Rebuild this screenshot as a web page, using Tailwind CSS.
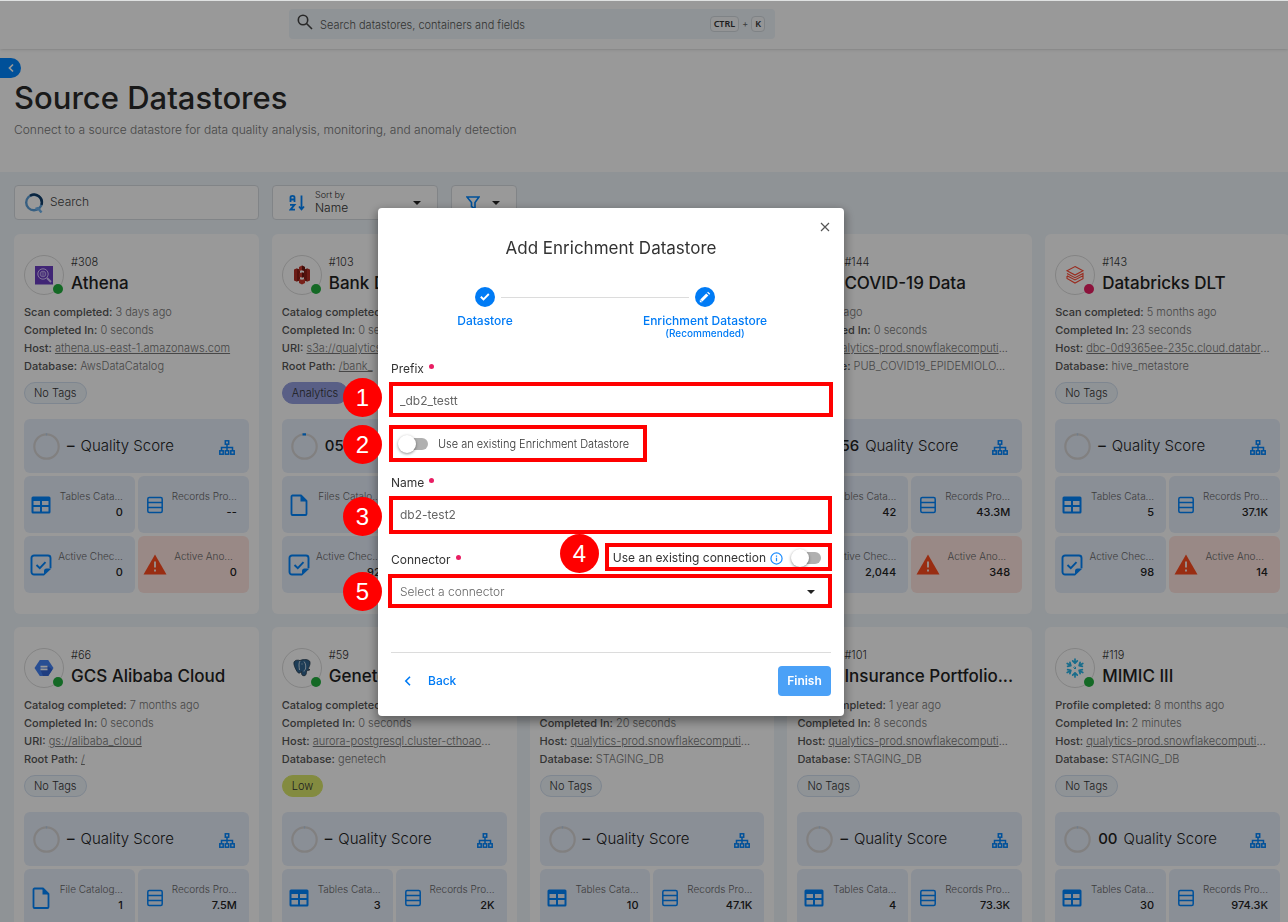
<!DOCTYPE html>
<html lang="en">
<head>
<meta charset="utf-8">
<title>Source Datastores</title>
<script src="https://cdn.jsdelivr.net/npm/@tailwindcss/browser@4"></script>
</head>
<body class="h-screen overflow-hidden bg-[#dfe1e1] pt-px font-['Inter',sans-serif] text-xs text-[#333]">

<svg class="hidden" aria-hidden="true">
  <symbol id="i-tree" viewBox="0 0 16 15"><g fill="none" stroke="currentColor" stroke-width="1.5"><rect x="6.3" y=".8" width="3.4" height="3.4"/><rect x=".8" y="10.8" width="3.4" height="3.4"/><rect x="6.3" y="10.8" width="3.4" height="3.4"/><rect x="11.8" y="10.8" width="3.4" height="3.4"/><path d="M8 4v7M2.5 11V7.5h11V11"/></g></symbol>
  <symbol id="i-table" viewBox="0 0 20 18"><path fill="currentColor" fill-rule="evenodd" d="M2 .5h16a1.500 1.500 0 0 1 1.500 1.500v14a1.500 1.500 0 0 1-1.500 1.500H2A1.500 1.500 0 0 1 .5 16V2A1.500 1.500 0 0 1 2 .5zM2.500 5v4H9V5zM11 5v4h6.500V5zM2.500 11v4.500H9V11zM11 11v4.500h6.500V11z"/></symbol>
  <symbol id="i-records" viewBox="0 0 16 18"><g fill="none" stroke="currentColor" stroke-width="1.500"><rect x=".8" y="1.500" width="14.400" height="15" rx="1.500"/><path d="M1 6.500h14M1 11.500h14"/></g></symbol>
  <symbol id="i-file" viewBox="0 0 18 22"><path fill="none" stroke="currentColor" stroke-width="1.800" stroke-linejoin="round" d="M2.500 1.500h8.500l5.500 5.500v13a1 1 0 0 1-1 1h-13a1 1 0 0 1-1-1v-17.500a1 1 0 0 1 1-1z"/><path fill="currentColor" d="M10.500 1.500v6h6z"/></symbol>
  <symbol id="i-check" viewBox="0 0 22 22"><path fill="none" stroke="currentColor" stroke-width="1.900" d="M14 20.500H4A2.500 2.500 0 0 1 1.500 18V4A2.500 2.500 0 0 1 4 1.500h14A2.500 2.500 0 0 1 20.500 4v10M6.500 11l3.300 3.200 5.700-6"/><path fill="currentColor" d="M14 21.500V17a2.500 2.500 0 0 1 2.500-2.500h5z"/></symbol>
  <symbol id="i-warn" viewBox="0 0 24 21"><path fill="#ff4b1f" d="M12 .5 23.500 20.500H.5z"/><path fill="#ffe5e0" d="M11 7.500h2v6h-2zM11 15.500h2v2h-2z"/></symbol>
  <symbol id="l-athena" viewBox="0 0 20 20"><rect x="1" y="1" width="18" height="18.500" fill="#6c3fc4"/><g fill="none" stroke="#d9c8ff"><circle cx="9" cy="9" r="5.200" stroke-width="1"/><circle cx="9" cy="9" r="2.800" stroke-width=".8"/><path d="m13 13 4 4" stroke-width="1.800"/><path d="M7.500 8h3M7.500 10h3" stroke-width=".8"/></g></symbol>
  <symbol id="l-s3" viewBox="0 0 20 20"><path fill="#b53025" d="m2 4.500 3-1.200v13.400l-3-1.200zM18 4.500l-3-1.200v13.400l3-1.200z"/><path fill="#8c1f17" d="m5 3.500 3 1v11l-3 1zM15 3.500l-3 1v11l3 1z"/><path fill="#c8382c" d="m10 .5 3 1.500v4l-3-.8-3 .8V2zM10 19.500 13 18v-4l-3 .8L7 14v4zM7.500 8l2.500-.5 2.500.5v4l-2.500.5L7.500 12z"/><path fill="#6d1710" d="M10 .5 13 2v4l-3-.8zM10 7.500l2.500.5v4l-2.500.5z"/></symbol>
  <symbol id="l-dbx" viewBox="0 0 20 20"><path fill="none" stroke="#ff4a35" stroke-width="1.100" d="m10 1.500 8 4.300-8 4.300-8-4.300zM2 8.500l8 4.200 8-4.200v2.200L10 15l-8-4.200M2 11v2.500L10 18l8-4.300V11"/></symbol>
  <symbol id="l-gcs" viewBox="0 0 20 20"><path fill="#4482f5" d="M5.800 2h8.400l5.300 8-5.300 8H5.800L.5 10z"/><path fill="#3367d6" d="m13.500 8 5 3.500-4.300 6.500H9l-2.500-6z"/><path fill="#fff" d="M6.500 7.700h7v1.900h-7zM6.500 10.400h7v1.900h-7z"/></symbol>
  <symbol id="l-pg" viewBox="0 0 20 20"><path fill="#336791" stroke="#283b4d" stroke-width=".8" d="M2 4c1-2 4-2.200 6-1.400C10 1.500 15 .8 17.500 3c1.500 2.500-.5 6-1.500 8.200l2 .4c-1 1-2.300 1-3.300.9-.4 2.500-.2 5.200-2.700 5.300-2.500 0-2.500-2-2.500-4.300l-1 .9c-.7 1.100-2.300 1-3.300-.7C3.500 11 1.300 6.500 2 4z"/><path fill="none" stroke="#eef4fa" stroke-width=".8" d="M8 3C6.500 5 7 8.500 7.500 12M12 3.500c1.800 2 2 5 1.500 7.500-.5 1.500-1.500 1-1.500 2.500M9.500 6h1"/></symbol>
  <symbol id="l-snow" viewBox="0 0 20 20"><g fill="none" stroke="#29b5e8" stroke-width="1.700" stroke-linecap="round" stroke-linejoin="round"><g id="arm"><path d="M10 1v4.200M7.700 2.800 10 5.200l2.300-2.400"/></g><use href="#arm" transform="rotate(60 10 10)"/><use href="#arm" transform="rotate(120 10 10)"/><use href="#arm" transform="rotate(180 10 10)"/><use href="#arm" transform="rotate(240 10 10)"/><use href="#arm" transform="rotate(300 10 10)"/><path stroke-width="1" d="m10 9 1 1-1 1-1-1z"/></g></symbol>
</svg>

<div class="flex h-full flex-col overflow-hidden bg-[#eff5fa]">
  <header class="relative z-10 flex h-12 shrink-0 bg-white pl-[289px] pr-[513px] pt-2 shadow">
    <label class="flex h-[30px] flex-1 items-center rounded bg-[#eff5fa] px-2 text-[#666]">
      <svg class="-mt-1 size-4 shrink-0" viewBox="0 0 16 16" fill="none" stroke="#444" stroke-width="1.600"><circle cx="6" cy="6" r="4.700"/><path d="m9.500 9.500 5.500 5.500"/></svg>
      <input type="text" aria-label="Search datastores" placeholder="Search datastores, containers and fields" class="ml-[7px] min-w-0 flex-1 bg-transparent pt-0.5 text-[11px] font-light outline-none placeholder:text-[#555]">
      <kbd class="rounded border border-[#d4dae0] bg-[#f7f9fb] px-[3px] font-['Noto_Sans',sans-serif] text-[9px] font-semibold leading-[14px] text-[#333]">CTRL</kbd>
      <span class="mx-[3px] text-[9px]">+</span>
      <kbd class="mr-0.5 rounded border border-[#d4dae0] bg-[#f7f9fb] px-[3px] font-['Noto_Sans',sans-serif] text-[9px] font-semibold leading-[14px] text-[#333]">K</kbd>
    </label>
  </header>

  <section class="h-[123px] shrink-0 bg-white pt-[9px]">
    <button aria-label="Collapse" class="flex h-5 w-[21px] items-center justify-center rounded-r-full bg-[#0086ff] text-white">
      <svg class="size-2.5" viewBox="0 0 10 10" fill="none" stroke="currentColor" stroke-width="1.700"><path d="M7 1.500 3.500 5 7 8.500"/></svg>
    </button>
    <h1 class="ml-3.5 text-[31px] font-medium leading-10 text-[#2b2b2b]">Source Datastores</h1>
    <p class="ml-3.5 mt-1 leading-4 font-light text-[#777]">Connect to a source datastore for data quality analysis, monitoring, and anomaly detection</p>
  </section>

  <div class="flex shrink-0 gap-[13px] px-3.5 pt-[13px]">
    <label class="flex h-[35px] w-[245px] items-center rounded border border-[#d8dde2] bg-white px-[9px]">
      <svg class="size-5 shrink-0" viewBox="0 0 20 20" fill="none"><circle cx="10" cy="9.500" r="7.800" stroke="#5d9fd8" stroke-width="2.400"/><path d="M6 2.800a7.800 7.800 0 0 1 11.500 9" stroke="#123f6b" stroke-width="2.400"/><path d="m11.500 16 2.500-.8 3.500 4.300" stroke="#6fb4ee" stroke-width="2.400"/></svg>
      <input type="search" aria-label="Search" placeholder="Search" class="ml-1.5 w-full bg-transparent pb-0.5 font-light outline-none placeholder:text-[#444]">
    </label>
    <button class="flex h-[35px] w-[166px] items-center rounded border border-[#d8dde2] bg-white px-4 text-left">
      <svg class="size-[18px] text-[#0086ff]" viewBox="0 0 18 18" fill="none" stroke="currentColor" stroke-width="1.800"><path d="M1.500 8V3.500Q1.500 1.800 3.500 1.800T5.500 3.500V8M1.500 5.500h4M1 10.800h4.500L1.500 15.700h4.500M12.500 1.500V15M10 12.500l2.500 2.800 2.500-2.800"/></svg>
      <span class="ml-2 flex-1 pb-0.5"><span class="block text-[9px] font-light leading-3">Sort by</span><span class="block leading-[13px] font-light">Name</span></span>
      <svg class="h-1 w-2" viewBox="0 0 8 4"><path d="M0 0h8L4 4z" fill="#222"/></svg>
    </button>
    <button aria-label="Filter" class="flex h-[35px] w-[66px] items-center gap-3 rounded border border-[#d8dde2] bg-white px-3.5">
      <svg class="size-[14px] text-[#0086ff]" viewBox="0 0 14 14" fill="none" stroke="currentColor" stroke-width="1.600"><path d="M1 1h12L9 6.500V13L5.500 10.500v-4z"/></svg>
      <svg class="h-1 w-2" viewBox="0 0 8 4"><path d="M0 0h8L4 4z" fill="#222"/></svg>
    </button>
  </div>

  <main id="cards" class="-mr-0.5 mt-3.5 grid shrink-0 grid-cols-5 gap-[13px] pl-3.5"></main>
</div>

<div class="fixed inset-x-0 bottom-0 top-px z-20 flex items-center justify-center bg-black/40 pr-[66px] pt-px">
  <form role="dialog" aria-labelledby="dlg-title" class="relative flex w-[466px] flex-col rounded bg-white px-[13px] pb-5 shadow-[0_4px_10px_2px_rgba(0,0,0,0.35)]">
    <button type="button" aria-label="Close" class="absolute right-[14px] top-[14px]">
      <svg class="size-[10px]" viewBox="0 0 10 10" stroke="#555" stroke-width="1.200"><path d="m1 1 8 8M9 1 1 9"/></svg>
    </button>
    <h2 id="dlg-title" class="mt-7 text-center text-[17px] leading-6">Add Enrichment Datastore</h2>

    <ol class="mt-[27px] flex h-[55px] justify-center pr-8 font-medium leading-[14px] text-[#007bf5]">
      <li class="flex w-8 flex-col items-center whitespace-nowrap">
        <svg class="size-5 shrink-0" viewBox="0 0 20 20"><circle cx="10" cy="10" r="10" fill="#007bf5"/><path d="m5.800 9.700 2.700 2.600 5.300-5.300" fill="none" stroke="#fff" stroke-width="1.900"/></svg>
        <span class="mt-[7px]">Datastore</span>
      </li>
      <li aria-hidden="true" class="mt-[10px] h-px w-[188px] bg-[#dcdcdc]"></li>
      <li class="flex w-8 flex-col items-center whitespace-nowrap">
        <svg class="size-5 shrink-0" viewBox="0 0 20 20"><circle cx="10" cy="10" r="10" fill="#007bf5"/><path d="m6.300 13.500 6-6" stroke="#fff" stroke-width="3"/><path d="m13.200 6.600.9-.9" stroke="#fff" stroke-width="3"/><path d="M4.800 15.200v-2.500l2.500 2.500z" fill="#fff"/></svg>
        <span class="mt-[7px]">Enrichment Datastore</span>
        <span class="text-[10px] leading-[11px]">(Recommended)</span>
      </li>
    </ol>

    <label for="prefix" class="mt-[18px] flex gap-[5px] leading-[18px]">Prefix <span class="mt-1 size-[5px] rounded-full bg-[#e91e63]"></span></label>
    <input id="prefix" type="text" value="_db2_testt" class="mt-[7px] h-[30px] rounded px-[9px] text-[#666] outline-none">

    <label class="mt-[19px] flex h-5 items-center gap-[10px] pl-[9px] text-[11px] font-light">
      <input type="checkbox" role="switch" class="relative h-3 w-7 appearance-none rounded-full bg-[#b0b0b0] before:absolute before:-left-0.5 before:-top-[3px] before:size-[18px] before:rounded-full before:bg-white before:shadow-[0_1px_3px_rgba(0,0,0,0.45)] before:content-['']">
      Use an existing Enrichment Datastore
    </label>

    <label for="name" class="mt-5 flex gap-[5px] leading-[18px]">Name <span class="mt-1 size-[5px] rounded-full bg-[#e91e63]"></span></label>
    <input id="name" type="text" value="db2-test2" class="mt-[7px] h-[30px] rounded px-[9px] text-[#666] outline-none">

    <div class="mt-5 flex items-center justify-between">
      <label for="connector" class="flex gap-[5px] pt-0.5 leading-[18px]">Connector <span class="mt-1 size-[5px] rounded-full bg-[#e91e63]"></span></label>
      <label class="flex items-center pb-0.5 pr-[10px]">
        Use an existing connection
        <svg class="ml-1 size-[13px]" viewBox="0 0 14 14" fill="none" stroke="#1a8cff" stroke-width="1.300"><circle cx="7" cy="7" r="6"/><path d="M7 6.200V10M7 3.800v1.300"/></svg>
        <input type="checkbox" role="switch" class="relative ml-[10px] h-3 w-7 appearance-none rounded-full bg-[#b0b0b0] before:absolute before:-left-0.5 before:-top-[3px] before:size-[18px] before:rounded-full before:bg-white before:shadow-[0_1px_3px_rgba(0,0,0,0.45)] before:content-['']">
      </label>
    </div>
    <div class="relative mt-2 flex items-center">
      <select id="connector" class="h-[30px] w-full appearance-none rounded px-[9px] font-light text-[#666] outline-none"><option>Select a connector</option></select>
      <svg class="absolute right-4 h-1 w-2" viewBox="0 0 8 4"><path d="M0 0h8L4 4z" fill="#222"/></svg>
    </div>

    <div class="mt-[45px] flex items-center justify-between border-t border-[#dcdcdc] pt-[13px]">
      <button type="button" class="flex items-center gap-[15px] pl-3 font-medium text-[#007bf5]">
        <svg class="size-[10px]" viewBox="0 0 10 10" fill="none" stroke="currentColor" stroke-width="1.600"><path d="M7 .8 2.800 5 7 9.200"/></svg>Back
      </button>
      <button type="submit" class="h-[30px] w-[53px] rounded-sm bg-[#4ba1f7] font-semibold text-white">Finish</button>
    </div>

    <!-- Numbered callouts drawn over the form -->
    <div class="pointer-events-none absolute inset-0 text-2xl text-white font-['Liberation_Sans',sans-serif]">
      <span class="absolute left-[11px] top-[174px] h-[35px] w-[444px] border-4 border-[#f00]"></span>
      <span class="absolute left-[11px] top-[217px] h-[37px] w-[258px] border-4 border-[#f00]"></span>
      <span class="absolute left-[11px] top-[288px] h-[38px] w-[443px] border-4 border-[#f00]"></span>
      <span class="absolute left-[227px] top-[335px] h-7 w-[227px] border-4 border-[#f00]"></span>
      <span class="absolute left-[10px] top-[366px] h-[34px] w-[444px] border-4 border-[#f00]"></span>
      <span class="absolute -left-[35px] top-[170px] flex size-[39px] items-center justify-center rounded-full bg-[#f00]">1</span>
      <span class="absolute -left-[35px] top-[217px] flex size-[39px] items-center justify-center rounded-full bg-[#f00]">2</span>
      <span class="absolute -left-[35px] top-[289px] flex size-[39px] items-center justify-center rounded-full bg-[#f00]">3</span>
      <span class="absolute left-[182px] top-[326px] flex size-[39px] items-center justify-center rounded-full bg-[#f00]">4</span>
      <span class="absolute -left-[35px] top-[364px] flex size-[39px] items-center justify-center rounded-full bg-[#f00]">5</span>
    </div>
  </form>
</div>

<script>
  const T = ['i-table', 'Tables Cata...'], F = ['i-file', 'Files Catalo...'];
  const cards = [
    { id: '#308', name: 'Athena', logo: 'l-athena', rows: [['Scan completed:', '3 days ago'], ['Completed In:', '0 seconds'], ['Host:', 'athena.us-east-1.amazonaws.com', 1], ['Database:', 'AwsDataCatalog']], tag: 'No Tags', score: '–', cat: [...T, '0'], rec: '--', chk: '0', ano: '0' },
    { id: '#103', name: 'Bank Dataset', logo: 'l-s3', rows: [['Catalog completed:', ''], ['Completed In:', '0 seconds'], ['URI:', 's3a://qualytics', 1], ['Root Path:', '/bank_', 1]], tag: 'Analytics', score: '05', arc: 1, cat: [...F, ''], rec: '', chk: '92', ano: '' },
    null,
    { id: '#144', name: 'COVID-19 Data', logo: 'l-snow', rows: [['', '2 weeks ago'], ['Completed In:', '0 seconds'], ['Host:', 'qualytics-prod.snowflakecomputi', 2], ['Database:', 'PUB_COVID19_EPIDEMIOLO...']], tag: '', score: '56', cat: [...T, '42'], rec: '43.3M', chk: '2,044', ano: '348' },
    { id: '#143', name: 'Databricks DLT', logo: 'l-dbx', down: 1, rows: [['Scan completed:', '5 months ago'], ['Completed In:', '23 seconds'], ['Host:', 'dbc-0d9365ee-235c.cloud.databr', 2], ['Database:', 'hive_metastore']], tag: 'No Tags', score: '–', cat: [...T, '5'], rec: '37.1K', chk: '98', ano: '14' },
    { id: '#66', name: 'GCS Alibaba Cloud', logo: 'l-gcs', rows: [['Catalog completed:', '7 months ago'], ['Completed In:', '0 seconds'], ['URI:', 'gs://alibaba_cloud', 1], ['Root Path:', '/', 1]], tag: 'No Tags', score: '–', cat: ['i-file', 'File Catalog...', '1'], rec: '7.5M' },
    { id: '#59', name: 'Genetech', logo: 'l-pg', rows: [['Catalog completed:', ''], ['Completed In:', '0 seconds'], ['Host:', 'aurora-postgresql.cluster-cthoao', 2], ['Database:', 'genetech']], tag: 'Low', score: '–', cat: [...T, '3'], rec: '2K' },
    { id: '', name: '', logo: 'l-snow', rows: [['', ''], ['Completed In:', '20 seconds'], ['Host:', 'qualytics-prod.snowflakecomputi', 2], ['Database:', 'STAGING_DB']], tag: 'No Tags', score: '–', cat: [...T, '10'], rec: '47.1K' },
    { id: '#101', name: 'Insurance Portfolio...', logo: 'l-snow', rows: [['Scan completed:', '1 year ago'], ['Completed In:', '8 seconds'], ['Host:', 'qualytics-prod.snowflakecomputi', 2], ['Database:', 'STAGING_DB']], tag: 'No Tags', score: '–', cat: [...T, '4'], rec: '73.3K' },
    { id: '#119', name: 'MIMIC III', logo: 'l-snow', rows: [['Profile completed:', '8 months ago'], ['Completed In:', '2 minutes'], ['Host:', 'qualytics-prod.snowflakecomputi', 2], ['Database:', 'STAGING_DB']], tag: 'No Tags', score: '00', cat: [...T, '30'], rec: '974.3K' }
  ];
  const tagClass = {
    'No Tags': 'rounded-full border border-[#d3e0f0] bg-[#eff5fa] px-[9px] leading-5 font-light',
    'Analytics': 'rounded-full border border-[#949edf] bg-[#949edf] px-[9px] leading-5 font-light',
    'Low': 'rounded-full border border-[#dbe86b] bg-[#dbe86b] px-[9px] leading-5 font-light'
  };
  const tile = (icon, label, value, warn) => `
    <div class="${warn ? 'flex h-[57px] items-center rounded-md bg-[#ffe5e0] pl-[5px] pr-3' : 'flex h-[57px] items-center rounded-md bg-[#e6eefb] pl-[5px] pr-3 text-[#0086ff]'}">
      <span class="flex w-6 shrink-0 justify-center"><svg class="${{ 'i-table': 'h-[18px] w-5', 'i-records': 'h-[18px] w-4', 'i-file': 'h-[22px] w-[18px]', 'i-check': 'size-[22px]', 'i-warn': 'h-[21px] w-6' }[icon]}"><use href="#${icon}"/></svg></span>
      <span class="flex-1 whitespace-nowrap pb-px text-right"><span class="${warn ? 'block pr-1 text-[10px] font-light leading-[15px] text-[#666]' : 'block text-[10px] font-light leading-[15px] text-[#666]'}">${label}</span><span class="block h-4 text-[11px] font-medium leading-4 text-[#222]">${value}</span></span>
    </div>`;
  const value = ([, v, link]) => link ? `<a href="#" class="underline">${v}</a>${link > 1 ? '...' : ''}` : v;
  document.getElementById('cards').innerHTML = cards.map(c => !c ? '<article class="rounded-md bg-white"></article>' : `
    <article class="h-[380px] rounded-md bg-white px-2.5 pt-[21px]">
      <div class="flex h-12">
        <span class="relative flex size-10 shrink-0 items-center justify-center rounded-full border border-[#dcdcdc]"><svg class="size-5"><use href="#${c.logo}"/></svg><span class="${c.down ? 'absolute right-0 bottom-0 size-2.5 rounded-full bg-[#e91e63]' : 'absolute right-0 bottom-0 size-2.5 rounded-full bg-[#22b03f]'}"></span></span>
        <div class="ml-[7px] whitespace-nowrap"><p class="h-3.5 text-[11px] font-light leading-3.5">${c.id}</p><h2 class="mt-0.5 text-[17px] font-medium leading-6 text-[#222]">${c.name}</h2></div>
      </div>
      ${c.rows.map(r => `<p class="h-[18px] whitespace-nowrap text-[11px] font-light leading-[18px] text-[#777]"><b class="font-medium text-[#555]">${r[0]}</b> ${value(r)}</p>`).join('')}
      <div class="mt-[7px] flex h-[22px] text-[11px]">${c.tag ? `<span class="${tagClass[c.tag]}">${c.tag}</span>` : ''}</div>
      <div class="mt-[15px] flex h-[54px] items-center rounded-md bg-[#e6eefb] pl-[9px] pr-[14px] text-[#222]">
        <svg class="size-[27px] shrink-0" viewBox="0 0 27 27" fill="none"><circle cx="13.500" cy="13.500" r="12.200" stroke="#d8d6d6" stroke-width="2.200"/><path d="${c.arc ? 'M11.500 1.400h3.500' : 'M12.800 1.400h1.400'}" stroke="${c.arc ? '#0086ff' : '#b9cfe8'}" stroke-width="2.200"/></svg>
        <span class="ml-[7px] text-[15px] font-medium">${c.score}</span><span class="ml-1.5 text-[15px] font-light">Quality Score</span>
        <svg class="ml-auto mt-0.5 h-[15px] w-4 text-[#0086ff]"><use href="#i-tree"/></svg>
      </div>
      <div class="mt-[3px] grid grid-cols-2 gap-[3px]">
        ${tile(...c.cat)}${tile('i-records', 'Records Pro...', c.rec)}${c.chk ? tile('i-check', 'Active Chec...', c.chk) + tile('i-warn', 'Active Ano...', c.ano, 1) : ''}
      </div>
    </article>`).join('');
</script>
</body>
</html>
